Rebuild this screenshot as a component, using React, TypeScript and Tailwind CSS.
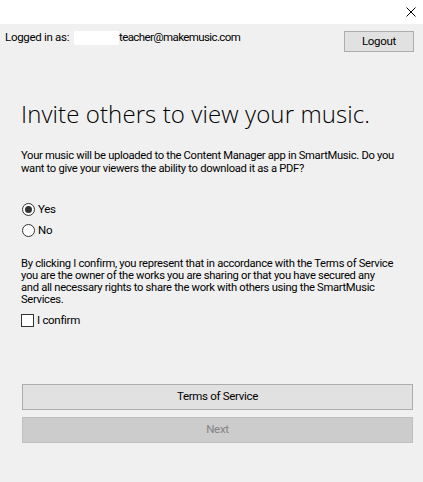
import React from 'react';

function RadioRow({ checked, label }: { checked: boolean; label: string }) {
  return (
    <div className="flex items-center h-[13px]">
      <span className="w-[13px] h-[13px] rounded-full border border-[#333333] bg-white flex items-center justify-center">
        {checked && <span className="w-[7px] h-[7px] rounded-full bg-[#333333]" />}
      </span>
      <span className="ml-[3px] text-[11.5px] leading-[13px] text-black">{label}</span>
    </div>
  );
}

export default function App() {
  return (
    <div className="w-[423px] h-[482px] bg-[#f0f0f0] flex flex-col font-['Roboto',sans-serif] text-black tracking-[-0.3px]">
      {/* title bar */}
      <div className="h-[24px] bg-white flex justify-end pr-[7px] pt-[7px]">
        <svg width="10" height="10" viewBox="0 0 10 10" className="block">
          <path d="M0.5 0.5 L9.5 9.5 M9.5 0.5 L0.5 9.5" stroke="#000" strokeWidth="1" />
        </svg>
      </div>

      {/* login row */}
      <div className="flex justify-between pl-[5px] pr-[9px]">
        <div className="flex items-start pt-[6px] text-[11.5px] leading-[14px]">
          <span className="w-[69px]">Logged in as:</span>
          <span className="mt-[1px] w-[45px] h-[14px] bg-white" />
          <span className="tracking-[-0.6px]">teacher@makemusic.com</span>
        </div>
        <button
          type="button"
          className="mt-[7px] w-[70px] h-[21px] bg-[#e1e1e1] border border-[#adadad] text-[11.5px] leading-[19px] text-center"
        >
          Logout
        </button>
      </div>

      {/* body */}
      <div className="pl-[21px] pr-[10px] flex flex-col">
        <h1 className="mt-[46px] text-[24px] leading-[32px] font-light tracking-[0.1px] font-['Open_Sans',sans-serif]">
          Invite others to view your music.
        </h1>
        <p className="mt-[19px] text-[11.2px] leading-[13px]">
          Your music will be uploaded to the Content Manager app in SmartMusic. Do you want to give your viewers the ability to download it as a PDF?
        </p>

        <div className="mt-[28px] flex flex-col gap-[8px] pl-[1px]">
          <RadioRow checked label="Yes" />
          <RadioRow checked={false} label="No" />
        </div>

        <p className="mt-[21px] text-[11.2px] leading-[12px]">
          By clicking I confirm, you represent that in accordance with the Terms of Service
          <br />
          you are the owner of the works you are sharing or that you have secured any
          <br />
          and all necessary rights to share the work with others using the SmartMusic
          <br />
          Services.
        </p>

        <label className="mt-[8px] flex items-center h-[13px]">
          <span className="w-[13px] h-[13px] border border-[#333333] bg-white" />
          <span className="ml-[3px] text-[11.5px] leading-[13px]">I confirm</span>
        </label>

        <div className="mt-[57px] flex flex-col gap-[7px] pl-[1px]">
          <button
            type="button"
            className="h-[26px] bg-[#e1e1e1] border border-[#adadad] text-[11.5px] text-center"
          >
            Terms of Service
          </button>
          <button
            type="button"
            disabled
            className="h-[26px] bg-[#cccccc] border border-[#bfbfbf] text-[11.5px] text-[#838383] text-center"
          >
            Next
          </button>
        </div>
      </div>
    </div>
  );
}
